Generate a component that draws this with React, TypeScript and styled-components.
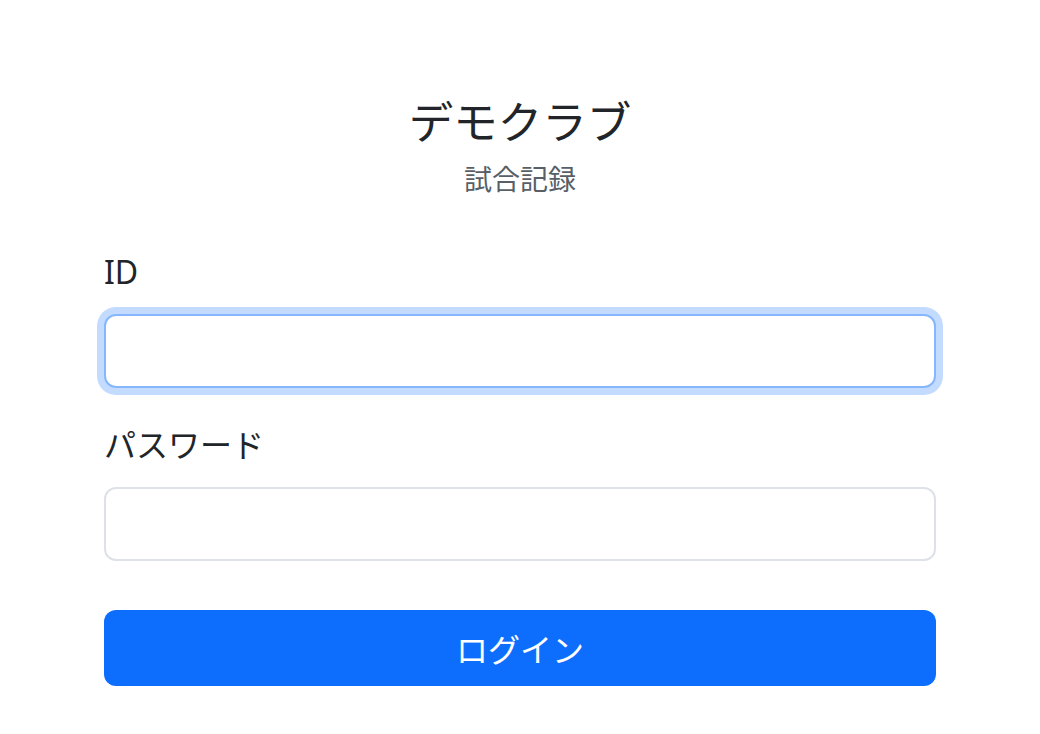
import styled, { createGlobalStyle } from 'styled-components'

const GlobalStyle = createGlobalStyle`
	* {
		box-sizing: border-box;
	}
	body {
		margin: 0;
		background: #fff;
		color: #212529;
		font-family: "Noto Sans", "Noto Sans CJK JP", sans-serif;
	}
`

const App = () => {
	return (
		<>
			<GlobalStyle />
			<Page>
				<Header>
					<ClubName>デモクラブ</ClubName>
					<SubTitle>試合記録</SubTitle>
				</Header>
				<Form onSubmit={(e) => e.preventDefault()}>
					<Field>
						<Label htmlFor="login-id">ID</Label>
						<Input id="login-id" type="text" $focused />
					</Field>
					<Field>
						<Label htmlFor="login-password">パスワード</Label>
						<Input id="login-password" type="password" />
					</Field>
					<SubmitButton type="submit">ログイン</SubmitButton>
				</Form>
			</Page>
		</>
	)
}

export default App

const Page = styled.div`
	max-width: 832px;
	margin: 0 auto;
	padding-top: 95px;
`

const Header = styled.div`
	display: flex;
	flex-direction: column;
	align-items: center;
	gap: 11px;
	margin-bottom: 50px;
`

const ClubName = styled.h1`
	margin: 0;
	font-size: 44.5px;
	font-weight: 400;
	line-height: 53px;
	color: #212529;
`

const SubTitle = styled.div`
	font-size: 28px;
	line-height: 40px;
	color: #595f66;
`

const Form = styled.form`
	display: flex;
	flex-direction: column;
`

const Field = styled.div`
	display: flex;
	flex-direction: column;
	gap: 20px;
	margin-bottom: 34px;

	& + & {
		margin-bottom: 49px;
	}
`

const Label = styled.label`
	font-size: 32px;
	line-height: 45px;
	color: #212529;
`

const Input = styled.input<{ $focused?: boolean }>`
	height: 74px;
	padding: 12px 24px;
	font-size: 30px;
	font-family: inherit;
	color: #212529;
	background: #fff;
	border: 2px solid ${(p) => (p.$focused ? '#86b7fe' : '#dee2e6')};
	border-radius: 12px;
	outline: none;
	box-shadow: ${(p) => (p.$focused ? '0 0 0 7px rgba(13, 110, 253, 0.25)' : 'none')};

	&:focus {
		border-color: #86b7fe;
		box-shadow: 0 0 0 7px rgba(13, 110, 253, 0.25);
	}
`

const SubmitButton = styled.button`
	height: 76px;
	font-size: 32px;
	font-family: inherit;
	color: #fff;
	background: #0d6efd;
	border: none;
	border-radius: 12px;
	cursor: pointer;
`
